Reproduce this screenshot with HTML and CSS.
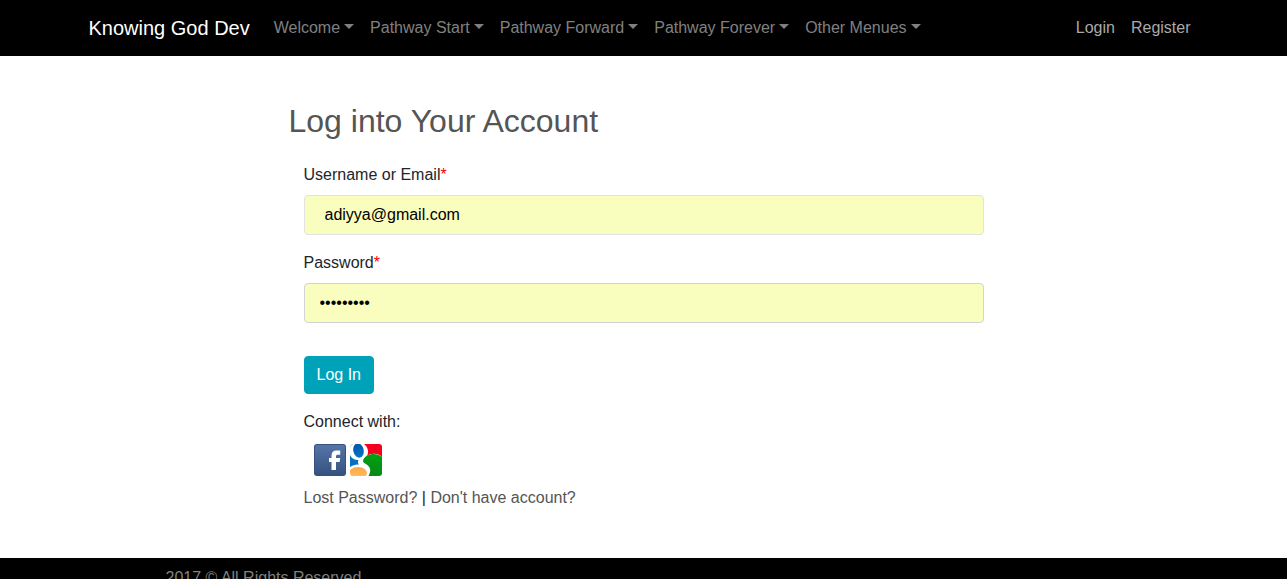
FILE: index.html
```html
<!DOCTYPE html>
<html lang="en">
<head>
<meta charset="utf-8">
<meta name="viewport" content="width=device-width, initial-scale=1">
<title>Log In - Knowing God Dev</title>
<link rel="stylesheet" href="styles.css">
</head>
<body>
<header class="navbar">
  <nav class="container navbar-inner">
    <a class="brand" href="#">Knowing God Dev</a>
    <ul class="menu">
      <li><a class="menu-link dropdown" href="#">Welcome</a></li>
      <li><a class="menu-link dropdown" href="#">Pathway Start</a></li>
      <li><a class="menu-link dropdown" href="#">Pathway Forward</a></li>
      <li><a class="menu-link dropdown" href="#">Pathway Forever</a></li>
      <li><a class="menu-link dropdown" href="#">Other Menues</a></li>
    </ul>
    <ul class="menu account">
      <li><a class="menu-link" href="#">Login</a></li>
      <li><a class="menu-link" href="#">Register</a></li>
    </ul>
  </nav>
</header>
<main class="panel">
  <h1 class="title">Log into Your Account</h1>
  <form class="form">
    <div class="field">
      <label for="user">Username or Email<span class="required">*</span></label>
      <input class="input input-user" id="user" type="text" value="adiyya@gmail.com">
    </div>
    <div class="field">
      <label for="pass">Password<span class="required">*</span></label>
      <input class="input input-pass" id="pass" type="password" value="password1">
    </div>
    <button class="button" type="submit">Log In</button>
    <p class="connect">Connect with:</p>
    <div class="social">
      <a class="social-link" href="#" aria-label="Facebook">
        <svg class="social-icon" viewBox="0 0 32 32">
          <defs>
            <linearGradient id="fb" x1="0" y1="0" x2="0" y2="1">
              <stop offset="0" stop-color="#5575a8"/>
              <stop offset="1" stop-color="#35527f"/>
            </linearGradient>
          </defs>
          <rect width="32" height="32" rx="3" fill="#34517f"/>
          <rect x="1" y="1" width="30" height="30" rx="2" fill="url(#fb)"/>
          <path d="M17.500 26V18H15V14H17.500V12C17.500 8.300 19.300 6.500 22.500 6.500H26.200V10.700H24C22.500 10.700 22 11.200 22 12.400V14H26.200L25.600 18H22V26Z" fill="#fff"/>
        </svg>
      </a>
      <a class="social-link" href="#" aria-label="Google">
        <svg class="social-icon" viewBox="0 0 32 32">
          <defs>
            <clipPath id="tile"><rect width="32" height="32" rx="3"/></clipPath>
            <linearGradient id="blue" x1="0" y1="0" x2="0" y2="1">
              <stop offset="0" stop-color="#0054a8"/>
              <stop offset="1" stop-color="#0077c8"/>
            </linearGradient>
            <linearGradient id="green" x1="0" y1="0" x2="0" y2="1">
              <stop offset="0" stop-color="#00a010"/>
              <stop offset="1" stop-color="#078a18"/>
            </linearGradient>
            <linearGradient id="amber" x1="0" y1="0" x2="0" y2="1">
              <stop offset="0" stop-color="#ffa842"/>
              <stop offset="1" stop-color="#ffc06c"/>
            </linearGradient>
          </defs>
          <g clip-path="url(#tile)">
            <rect width="32" height="32" fill="#fff"/>
            <path d="M14 0H32V13C28 9 21 9 17 12C19 8 18 3 14 0Z" fill="#f5001d"/>
            <path d="M13 17C13 15 15 13 17 11.500C22 9 28 9.500 32 13V32H18.500C22 26 20 22 15 19.500C14 19 13 18 13 17Z" fill="url(#green)"/>
            <path d="M0 11C2 15 5 16 8.500 16C7.500 18 8 19.500 9 20.500C6 20.500 3 21 0 23Z" fill="#0871bd"/>
            <ellipse cx="8.500" cy="6.500" rx="5.200" ry="7.200" transform="rotate(-12 8.500 6.500)" fill="url(#blue)"/>
            <path d="M0 0H4C2 1 0 3 0 5Z" fill="#d5e5f2"/>
            <ellipse cx="8" cy="29" rx="9" ry="6" fill="url(#amber)"/>
          </g>
        </svg>
      </a>
    </div>
    <p class="links"><a href="#">Lost Password?</a> | <a href="#">Don't have account?</a></p>
  </form>
</main>
<footer class="footer">
  <div class="container">
    <p class="copyright">2017 © All Rights Reserved</p>
  </div>
</footer>
</body>
</html>
```

FILE: styles.css
```css
*, *::before, *::after {
  box-sizing: border-box;
}

body {
  margin: 0;
  background: #fff;
  color: #212529;
  font-family: "Liberation Sans", Arial, sans-serif;
  font-size: 16px;
  line-height: 24px;
}

a {
  color: #555;
  text-decoration: none;
}

.container {
  width: 100%;
  max-width: 1140px;
  margin: 0 auto;
  padding: 0 15px;
}

.navbar {
  background: #000;
  padding: 8px 0;
}

.navbar-inner {
  display: flex;
  align-items: center;
}

.brand {
  margin-right: 16px;
  color: #fff;
  font-size: 20px;
  line-height: 30px;
}

.menu {
  display: flex;
  margin: 0;
  padding: 0;
  list-style: none;
}

.menu-link {
  display: block;
  padding: 8px;
  color: #808080;
  white-space: nowrap;
}

.account {
  margin-left: auto;
}

.account .menu-link {
  color: #aaa;
}

.dropdown::after {
  content: "";
  display: inline-block;
  margin-left: 4px;
  vertical-align: 4px;
  border: 5px solid transparent;
  border-top-color: currentColor;
  border-bottom: 0;
}

.panel {
  max-width: 710px;
  margin: 0 auto;
  padding: 46px 0 48px;
}

.title {
  margin: 0 0 23px;
  color: #555;
  font-size: 32px;
  font-weight: 400;
  line-height: 38px;
}

.form {
  padding: 0 15px;
}

.field {
  display: flex;
  flex-direction: column;
  gap: 8px;
  margin-bottom: 16px;
}

.required {
  color: #f00;
}

.input {
  width: 100%;
  height: 40px;
  border: 1px solid #e2e2e2;
  border-radius: 4px;
  background: #f9fdbd;
  color: #000;
  font: inherit;
}

.input-user {
  padding: 0 20px;
}

.input-pass {
  padding: 0 15px;
  border-color: #d3d3d3;
}

.button {
  display: block;
  margin-top: 33px;
  padding: 6px 12px;
  border: 1px solid #00a2b9;
  border-radius: 4px;
  background: #00a2b9;
  color: #fff;
  font: inherit;
  cursor: pointer;
}

.connect {
  margin: 16px 0 10px;
}

.social {
  display: flex;
  gap: 4px;
  padding: 0 10px;
}

.social-icon {
  display: block;
  width: 32px;
  height: 32px;
}

.links {
  margin: 10px 0 0;
}

.footer {
  padding: 8px 0;
  background: #000;
  color: #808080;
}

.copyright {
  margin: 0;
  padding: 0 77px;
}
```
